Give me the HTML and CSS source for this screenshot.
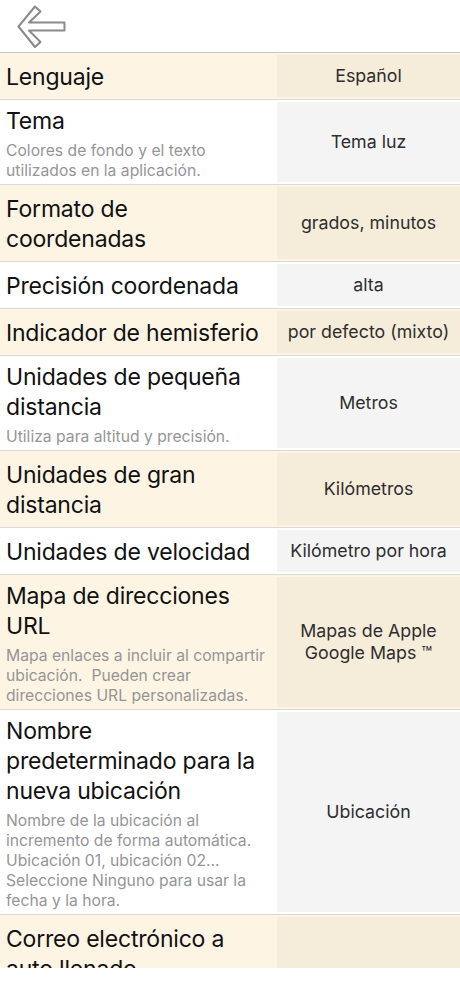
FILE: index.html
```html
<!DOCTYPE html>
<html lang="es">
<head>
<meta charset="utf-8">
<title>Ajustes</title>
<link rel="stylesheet" href="styles.css">
</head>
<body>
<div class="screen">
  <header class="topbar">
    <svg class="back" width="70" height="52" viewBox="0 0 70 52" aria-hidden="true">
      <polygon points="18.5,26.5 35,6.5 40.5,11.5 29,22.5 64.5,22.5 64.5,30.5 29,30.5 40.5,42 35,47" fill="none" stroke="#8a8a8a" stroke-width="2" stroke-linejoin="round"/>
    </svg>
  </header>
  <div class="list">
    <div class="row cream">
      <div class="label solo"><div class="title">Lenguaje</div></div>
      <div class="value">Español</div>
    </div>
    <div class="row plain">
      <div class="label"><div class="title">Tema</div><div class="sub">Colores de fondo y el texto<br>utilizados en la aplicación.</div></div>
      <div class="value">Tema luz</div>
    </div>
    <div class="row cream">
      <div class="label solo"><div class="title">Formato de<br>coordenadas</div></div>
      <div class="value">grados, minutos</div>
    </div>
    <div class="row plain">
      <div class="label solo"><div class="title">Precisión coordenada</div></div>
      <div class="value">alta</div>
    </div>
    <div class="row cream">
      <div class="label solo"><div class="title">Indicador de hemisferio</div></div>
      <div class="value">por defecto (mixto)</div>
    </div>
    <div class="row plain">
      <div class="label"><div class="title">Unidades de pequeña<br>distancia</div><div class="sub">Utiliza para altitud y precisión.</div></div>
      <div class="value">Metros</div>
    </div>
    <div class="row cream">
      <div class="label solo"><div class="title">Unidades de gran<br>distancia</div></div>
      <div class="value">Kilómetros</div>
    </div>
    <div class="row plain">
      <div class="label solo"><div class="title">Unidades de velocidad</div></div>
      <div class="value">Kilómetro por hora</div>
    </div>
    <div class="row cream">
      <div class="label"><div class="title">Mapa de direcciones<br>URL</div><div class="sub">Mapa enlaces a incluir al compartir<br>ubicación.&nbsp; Pueden crear<br>direcciones URL personalizadas.</div></div>
      <div class="value">Mapas de Apple<br>Google Maps ™</div>
    </div>
    <div class="row plain">
      <div class="label"><div class="title">Nombre<br>predeterminado para la<br>nueva ubicación</div><div class="sub">Nombre de la ubicación al<br>incremento de forma automática.<br>Ubicación 01, ubicación 02...<br>Seleccione Ninguno para usar la<br>fecha y la hora.</div></div>
      <div class="value">Ubicación</div>
    </div>
    <div class="row cream">
      <div class="label solo"><div class="title">Correo electrónico a<br>auto llenado</div></div>
      <div class="value"></div>
    </div>
  </div>
</div>
</body>
</html>
```
FILE: styles.css
```css
html, body {
  margin: 0;
  padding: 0;
  background: #ffffff;
}

body {
  font-family: Inter, "Noto Sans", "Liberation Sans", sans-serif;
  color: #111111;
}

.screen {
  width: 460px;
  height: 968px;
  overflow: hidden;
  background: #ffffff;
}

.topbar {
  height: 52px;
  border-bottom: 1px solid #c9c7c4;
  display: flex;
  align-items: flex-start;
}

.back {
  display: block;
}

.list {
  display: flex;
  flex-direction: column;
}

.row {
  display: flex;
  border-bottom: 1px solid #dcd9d4;
}

.row.cream {
  background: #fdf4e3;
}

.row.cream .value {
  background: #f6ecda;
}

.row.plain {
  background: #ffffff;
}

.row.plain .value {
  background: #f4f4f5;
}

.label {
  width: 277px;
  flex: none;
  box-sizing: border-box;
  padding: 6px 6px 3px 6px;
  display: flex;
  flex-direction: column;
  gap: 5px;
}

.label.solo {
  padding: 9px 6px 7px 6px;
}

.title {
  font-size: 23px;
  line-height: 30px;
  color: #111111;
  letter-spacing: -0.2px;
}

.sub {
  font-size: 15.7px;
  line-height: 20px;
  color: #959595;
}

.value {
  flex: 1;
  margin: 2px 0;
  display: flex;
  align-items: center;
  justify-content: center;
  text-align: center;
  font-size: 17.8px;
  line-height: 22px;
  color: #2e2e2e;
}
```
